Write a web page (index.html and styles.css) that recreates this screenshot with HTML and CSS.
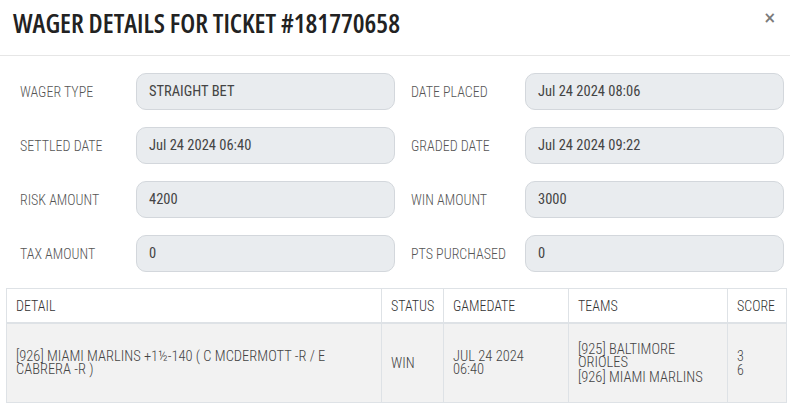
FILE: index.html
```html
<!DOCTYPE html>
<html>
<head>
<meta charset="utf-8">
<link rel="stylesheet" href="styles.css">
</head>
<body>
<div class="modal">
  <div class="modal-header">
    <h1 class="title">WAGER DETAILS FOR TICKET #181770658</h1>
    <span class="close">&times;</span>
  </div>
  <div class="form">
    <label class="lbl">WAGER TYPE</label>
    <div class="field">STRAIGHT BET</div>
    <label class="lbl lbl-right">DATE PLACED</label>
    <div class="field">Jul 24 2024 08:06</div>

    <label class="lbl">SETTLED DATE</label>
    <div class="field">Jul 24 2024 06:40</div>
    <label class="lbl lbl-right">GRADED DATE</label>
    <div class="field">Jul 24 2024 09:22</div>

    <label class="lbl">RISK AMOUNT</label>
    <div class="field">4200</div>
    <label class="lbl lbl-right">WIN AMOUNT</label>
    <div class="field">3000</div>

    <label class="lbl">TAX AMOUNT</label>
    <div class="field">0</div>
    <label class="lbl lbl-right">PTS PURCHASED</label>
    <div class="field">0</div>
  </div>
  <table class="grid">
    <colgroup>
      <col class="c-detail"><col class="c-status"><col class="c-date"><col class="c-teams"><col class="c-score">
    </colgroup>
    <thead>
      <tr><th>DETAIL</th><th>STATUS</th><th>GAMEDATE</th><th>TEAMS</th><th>SCORE</th></tr>
    </thead>
    <tbody>
      <tr>
        <td class="tight">[926] MIAMI MARLINS +1½-140 ( C MCDERMOTT -R / E CABRERA -R )</td>
        <td>WIN</td>
        <td class="tight">JUL 24 2024 06:40</td>
        <td class="tight"><div>[925] BALTIMORE ORIOLES</div><div class="team2">[926] MIAMI MARLINS</div></td>
        <td class="score"><div>3</div><div>6</div></td>
      </tr>
    </tbody>
  </table>
</div>
</body>
</html>
```
FILE: styles.css
```css
html, body {
  margin: 0;
  padding: 0;
  background: #fff;
}
body {
  font-family: "Roboto Condensed", Roboto, sans-serif;
  color: #333;
}
.modal {
  width: 790px;
}
.modal-header {
  height: 56px;
  border-bottom: 1px solid #e6e6e6;
  display: flex;
  justify-content: space-between;
  align-items: flex-start;
  padding: 0 13px 0 13px;
  box-sizing: border-box;
}
.title {
  margin: 7px 0 0 0;
  font-family: "Open Sans", sans-serif;
  font-stretch: 75%;
  font-weight: 600;
  font-size: 26.4px;
  line-height: 32px;
  color: #222;
  letter-spacing: 0;
}
.close {
  margin-top: 9px;
  margin-right: 1px;
  font-family: "DejaVu Sans", sans-serif;
  font-weight: 700;
  font-size: 15px;
  color: #7a7a7a;
}
.form {
  display: grid;
  grid-template-columns: 116px 259px 130px 259px;
  grid-auto-rows: 37px;
  row-gap: 17px;
  padding: 17px 0 0 20px;
}
.lbl {
  display: flex;
  align-items: center;
  font-size: 14px;
  font-weight: 300;
  color: #555;
}
.lbl-right {
  padding-left: 16px;
}
.field {
  display: flex;
  align-items: center;
  box-sizing: border-box;
  height: 37px;
  padding-left: 12px;
  background: #e9ecef;
  border: 1px solid #d3d7dc;
  border-radius: 10px;
  font-size: 14.5px;
  color: #444;
}
.grid {
  margin: 16px 0 0 6px;
  width: 780px;
  border-collapse: collapse;
  table-layout: fixed;
  font-size: 14px;
}
.c-detail { width: 375px; }
.c-status { width: 62px; }
.c-date { width: 125px; }
.c-teams { width: 159px; }
.c-score { width: 59px; }
.grid th, .grid td {
  border: 1px solid #dee2e6;
  padding: 0 14px 0 9px;
  text-align: left;
  vertical-align: middle;
  font-weight: 300;
  color: #444;
}
.grid th {
  height: 33px;
  border-bottom: 2px solid #dee2e6;
  font-size: 14px;
  color: #333;
}
.grid tbody tr {
  background: #f2f2f2;
}
.grid td {
  height: 78px;
  font-size: 14.5px;
}
.grid td.tight {
  line-height: 13px;
}
.grid td.score {
  font-size: 14px;
  line-height: 14px;
}
.team2 {
  margin-top: 2px;
}
```
